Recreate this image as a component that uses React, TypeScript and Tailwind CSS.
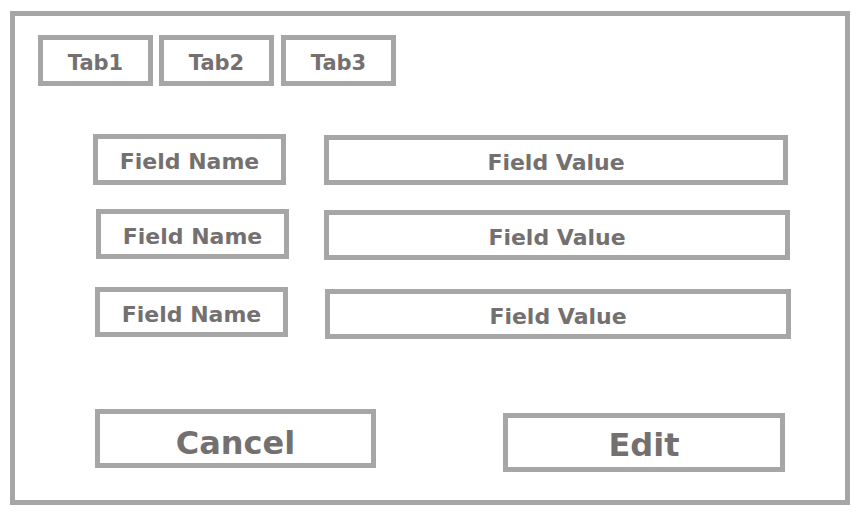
export default function App() {
  const box = 'flex items-center justify-center border-[5px] border-[#a6a6a6] bg-white font-bold text-[#747070]'
  const font = { fontFamily: '"DejaVu Sans", Verdana, sans-serif' }

  return (
    <div className="w-[860px] h-[512px] bg-white overflow-hidden" style={font}>
      <div className="mt-[11px] ml-[10px] w-[840px] h-[494px] border-[5px] border-[#a6a6a6] flex flex-col">
        {/* Tabs */}
        <div className="mt-[19px] ml-[23px] flex gap-[6px]">
          <div className={`${box} w-[115px] h-[51px] pt-[6px] text-[21px]`}>Tab1</div>
          <div className={`${box} w-[115px] h-[51px] pt-[6px] text-[21px]`}>Tab2</div>
          <div className={`${box} w-[115px] h-[51px] pt-[6px] text-[21px] ml-[1px]`}>Tab3</div>
        </div>

        {/* Fields */}
        <div className="mt-[48px] ml-[78px] flex items-start gap-[38px]">
          <div className={`${box} w-[193px] h-[51px] pt-[4px] text-[22px]`}>Field Name</div>
          <div className={`${box} w-[464px] h-[50px] pt-[4px] mt-[1px] text-[22px]`}>Field Value</div>
        </div>
        <div className="mt-[24px] ml-[81px] flex items-start gap-[35px]">
          <div className={`${box} w-[193px] h-[50px] pt-[4px] text-[22px]`}>Field Name</div>
          <div className={`${box} w-[466px] h-[50px] pt-[4px] mt-[1px] text-[22px]`}>Field Value</div>
        </div>
        <div className="mt-[27px] ml-[80px] flex items-start gap-[37px]">
          <div className={`${box} w-[193px] h-[50px] pt-[4px] text-[22px]`}>Field Name</div>
          <div className={`${box} w-[466px] h-[50px] pt-[4px] mt-[2px] text-[22px]`}>Field Value</div>
        </div>

        {/* Actions */}
        <div className="mt-[70px] ml-[80px] flex items-start gap-[127px]">
          <div className={`${box} w-[281px] h-[59px] pt-[8px] text-[32px]`}>Cancel</div>
          <div className={`${box} w-[282px] h-[59px] pt-[4px] mt-[4px] text-[32px]`}>Edit</div>
        </div>
      </div>
    </div>
  )
}
